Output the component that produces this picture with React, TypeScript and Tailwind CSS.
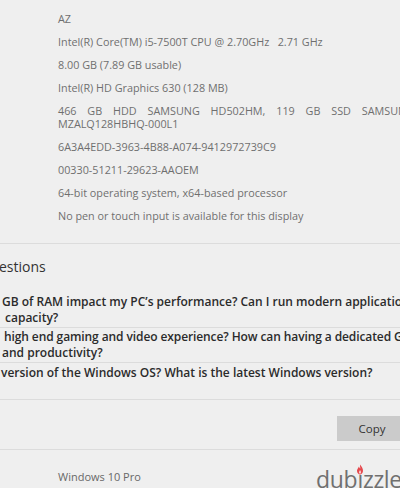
import React from 'react';

const specs: string[] = [
  'AZ',
  'Intel(R) Core(TM) i5-7500T CPU @ 2.70GHz\u00a0\u00a0\u00a02.71 GHz',
  '8.00 GB (7.89 GB usable)',
  'Intel(R) HD Graphics 630 (128 MB)',
  '466 GB HDD SAMSUNG HD502HM, 119 GB SSD SAMSUNG MZALQ128HBHQ-000L1',
  '6A3A4EDD-3963-4B88-A074-9412972739C9',
  '00330-51211-29623-AAOEM',
  '64-bit operating system, x64-based processor',
  'No pen or touch input is available for this display',
];

const questions: { lines: [string, string][]; box: string }[] = [
  {
    lines: [
      ['pl-[2px]', 'GB of RAM impact my PC\u2019s performance? Can I run modern applications with this'],
      ['pl-[5px]', 'capacity?'],
    ],
    box: 'pb-[1px]',
  },
  {
    lines: [
      ['pl-[4px] tracking-[-0.1px]', 'high end gaming and video experience? How can having a dedicated GPU help'],
      ['pl-[2px]', 'and productivity?'],
    ],
    box: 'pt-[1px] pb-[1px]',
  },
  {
    lines: [['pl-[1px]', 'version of the Windows OS? What is the latest Windows version?']],
    box: 'pt-[2px] pb-[18px]',
  },
];

function DubizzleLogo() {
  return (
    <div
      className="absolute right-[-2px] bottom-[-5px] text-[23px] leading-[28px] text-[#707070] tracking-[-0.3px]"
      style={{ fontFamily: '"Open Sans", sans-serif' }}
    >
      <span>dub</span>
      <span className="relative">
        {'\u0131'}
        <svg className="absolute left-[-1px] top-[1px]" width="8" height="11" viewBox="0 0 8 11">
          <path d="M4 0.5 C5.5 2.5 7.2 4.5 7 7 C6.8 9.2 5.4 10.5 4 10.5 C2.6 10.5 1.2 9.2 1 7 C0.9 5.2 2.3 4.2 3 2.6 C3.3 3.8 3.8 4.4 4.4 4.6 C4.2 3.2 3.8 1.8 4 0.5 Z" fill="#e5484d" />
          <path d="M4 6 C4.8 7 5.2 7.8 5 8.7 C4.8 9.4 4.4 9.7 4 9.7 C3.6 9.7 3.2 9.4 3 8.7 C2.9 7.8 3.4 7 4 6 Z" fill="#fbd0d2" />
        </svg>
      </span>
      <span>zzle</span>
    </div>
  );
}

export default function App() {
  return (
    <div
      className="relative w-[400px] h-[488px] overflow-hidden bg-[#efefef]"
      style={{ fontFamily: '"Open Sans", "Noto Sans", sans-serif' }}
    >
      {/* About: device specs */}
      <div className="pl-[58px] pt-[12px] w-[414px] flex flex-col gap-[10px] text-[10.8px] leading-[13px] text-[#6f6f6f]">
        {specs.map((s) => (
          <div key={s} className="text-justify">
            {s}
          </div>
        ))}
      </div>

      <div className="mt-[21px] border-t border-[#dcdcdc]" />

      {/* Related questions */}
      <div className="pt-[14px] -ml-[1px] text-[14px] leading-[18px] text-[#333]">estions</div>

      <div className="mt-[18px] flex flex-col text-[12px] leading-[16px] font-semibold text-[#2b2b2b]">
        {questions.map((q, i) => (
          <div key={i} className={`${q.box} border-b border-[#dcdcdc]`}>
            {q.lines.map(([pad, t]) => (
              <div key={t} className={`${pad} whitespace-nowrap`}>
                {t}
              </div>
            ))}
          </div>
        ))}
      </div>

      <div className="flex justify-end pt-[16px] pb-[8px] border-b border-[#dcdcdc]">
        <button className="w-[70px] h-[25px] -mr-[7px] bg-[#cbcbcb] text-[11.5px] text-[#333]">Copy</button>
      </div>

      <div className="pl-[58px] pt-[20px] text-[11px] leading-[14px] text-[#686868]">Windows 10 Pro</div>

      <DubizzleLogo />
    </div>
  );
}
